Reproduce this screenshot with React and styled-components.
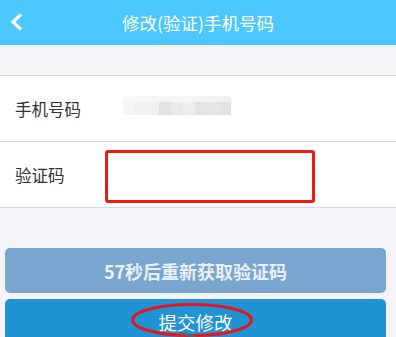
import React from "react";
import styled, { createGlobalStyle } from "styled-components";

const Global = createGlobalStyle`
  html, body { margin: 0; padding: 0; background: #f4f4f8; }
  body { font-family: "Noto Sans CJK SC", "Liberation Sans", sans-serif; }
`;

const Page = styled.div`
  width: 100%;
  height: 337px;
  overflow: hidden;
  background: #f4f4f8;
  display: flex;
  flex-direction: column;
`;

const Header = styled.header`
  height: 45px;
  background: #4cc8fe;
  display: flex;
  align-items: center;
  justify-content: center;
  position: relative;
  color: #fff;
  font-size: 17.5px;
  flex-shrink: 0;
`;

const Back = styled.svg`
  position: absolute;
  left: 8px;
  top: 12px;
`;

const Spacer = styled.div`
  height: 30px;
  flex-shrink: 0;
`;

const List = styled.div`
  background: #fff;
  border-top: 1px solid #d9d9d9;
`;

const Row = styled.div`
  height: 65px;
  display: flex;
  align-items: center;
  border-bottom: 1px solid #d9d9d9;
  padding-left: 15px;
`;

const Label = styled.div`
  width: 90px;
  font-size: 16.5px;
  color: #333;
`;

const Blur = styled.div`
  margin-left: 18px;
  margin-top: -6px;
  display: flex;
  flex-direction: column;
`;

const BlurTop = styled.div`
  height: 6px;
  width: 109px;
  background: linear-gradient(90deg, #f8f7f5, #f6f6f6 60%, #eef0ef);
  border-radius: 4px 6px 0 0;
`;

const Cells = styled.div`
  display: flex;
`;

const Cell = styled.div`
  width: 12px;
  height: 13px;
  background: ${(p) => p.$c};
`;

const CodeBox = styled.div`
  width: 204px;
  height: 47px;
  margin-top: 4px;
  border: 3px solid #f0190f;
  border-radius: 3px;
  background: #fff;
`;

const Buttons = styled.div`
  margin-top: 40px;
  padding: 0 10px 0 5px;
  display: flex;
  flex-direction: column;
  gap: 6px;
`;

const Button = styled.div`
  height: 45px;
  border-radius: 5px;
  background: ${(p) => p.$bg};
  color: ${(p) => p.$fg};
  font-size: ${(p) => p.$size};
  font-weight: ${(p) => p.$weight};
  display: flex;
  align-items: center;
  justify-content: center;
  position: relative;
`;

const Ellipse = styled.svg`
  position: absolute;
  left: 126px;
  top: 4px;
  overflow: visible;
`;

const cellColors = [
  "#f6f5f3",
  "#eef0f2",
  "#f1f0ed",
  "#e1e3e3",
  "#e9ebea",
  "#eeeeec",
  "#e3e3e3",
  "#e6e6e6",
  "#e2e2e2",
];

export default function App() {
  return (
    <>
      <Global />
      <Page>
        <Header>
          <Back width="18" height="22" viewBox="0 0 18 22">
            <path d="M13 2.5 L5 10 L13 17.5" fill="none" stroke="#fff" strokeWidth="3.2" />
          </Back>
          修改(验证)手机号码
        </Header>
        <Spacer />
        <List>
          <Row>
            <Label>手机号码</Label>
            <Blur>
              <BlurTop />
              <Cells>
                {cellColors.map((c, i) => (
                  <Cell key={i} $c={c} />
                ))}
              </Cells>
            </Blur>
          </Row>
          <Row>
            <Label>验证码</Label>
            <CodeBox />
          </Row>
        </List>
        <Buttons>
          <Button $bg="#78a6cf" $fg="#eaf0f8" $size="18px" $weight="700">
            57秒后重新获取验证码
          </Button>
          <Button $bg="#1f93d4" $fg="#fff" $size="18.5px" $weight="400">
            提交修改
            <Ellipse width="122" height="34" viewBox="0 0 122 34">
              <ellipse cx="61" cy="17" rx="59.5" ry="15.5" fill="none" stroke="#e8141b" strokeWidth="3" />
              <path d="M48 29 Q60 30 70 36 L64 37 Q56 32 48 31 Z" fill="#4d6878" />
            </Ellipse>
          </Button>
        </Buttons>
      </Page>
    </>
  );
}
